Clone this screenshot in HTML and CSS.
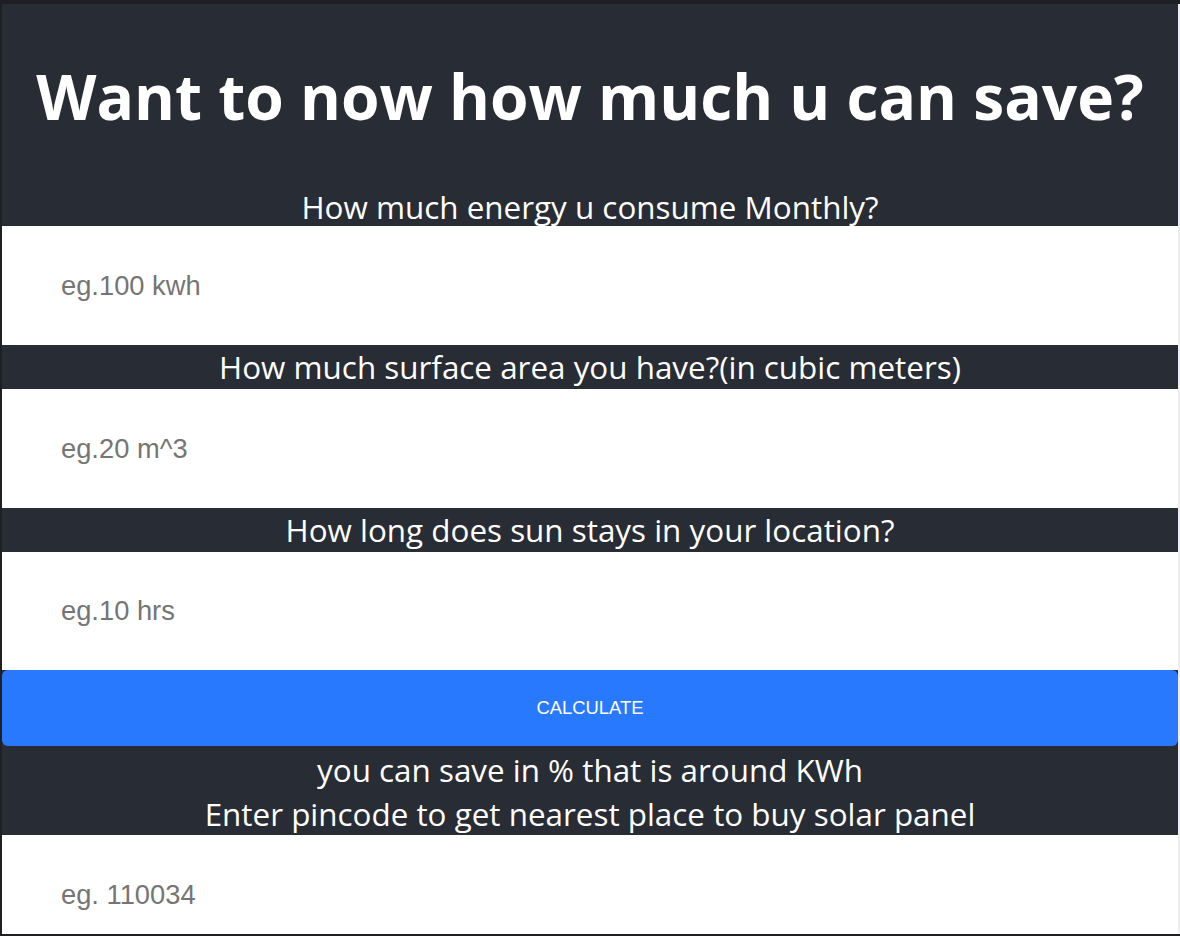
FILE: index.html
```html
<!DOCTYPE html>
<html lang="en">
<head>
<meta charset="utf-8">
<title>Solar savings</title>
<link rel="stylesheet" href="styles.css">
</head>
<body>
<main class="app">
  <h1 class="title">Want to now how much u can save?</h1>
  <label class="label label-first" for="energy">How much energy u consume Monthly?</label>
  <input class="field" id="energy" type="text" placeholder="eg.100 kwh">
  <label class="label" for="area">How much surface area you have?(in cubic meters)</label>
  <input class="field" id="area" type="text" placeholder="eg.20 m^3">
  <label class="label" for="sun">How long does sun stays in your location?</label>
  <input class="field field-short" id="sun" type="text" placeholder="eg.10 hrs">
  <button class="calc" type="button">CALCULATE</button>
  <p class="result">you can save in % that is around KWh<br>Enter pincode to get nearest place to buy solar panel</p>
  <input class="field" type="text" placeholder="eg. 110034">
</main>
</body>
</html>
```
FILE: styles.css
```css
html, body {
  margin: 0;
  padding: 0;
}
body {
  background: #1f2023;
  padding: 4px 0 2px 2px;
  height: 936px;
  box-sizing: border-box;
  overflow: hidden;
}
.app {
  background: #282c34;
  border-right: 2px solid #eeeeee;
  display: flex;
  flex-direction: column;
  align-items: stretch;
  color: #ffffff;
  font-family: "Open Sans", "Noto Sans", sans-serif;
  text-align: center;
  height: 930px;
  overflow: hidden;
}
.app > * {
  flex-shrink: 0;
}
.title {
  margin: 0;
  padding: 46px 0 0;
  height: 138px;
  font-size: 62.3px;
  font-weight: 700;
  line-height: 92px;
  white-space: nowrap;
}
.label {
  display: block;
  font-size: 31.4px;
  line-height: 44px;
  height: 44px;
  white-space: nowrap;
}
.label-first {
  height: 38px;
  line-height: 37px;
}
.field {
  display: block;
  box-sizing: border-box;
  width: 100%;
  height: 119px;
  margin: 0;
  border: none;
  outline: none;
  padding: 0 0 0 59px;
  background: #ffffff;
  font-family: "Liberation Sans", Arial, sans-serif;
  font-size: 27.3px;
  color: #333;
}
.field::placeholder {
  color: #757575;
}
.field-short {
  height: 118px;
}
.calc {
  display: block;
  width: 100%;
  height: 76px;
  margin: 0;
  border: none;
  border-radius: 6px;
  background: #2979ff;
  color: #ffffff;
  font-family: "Liberation Sans", Arial, sans-serif;
  font-size: 18.4px;
  cursor: pointer;
}
.result {
  margin: 0;
  padding: 2px 0 0;
  height: 89px;
  box-sizing: border-box;
  font-size: 31.4px;
  line-height: 44px;
  white-space: nowrap;
}
```
